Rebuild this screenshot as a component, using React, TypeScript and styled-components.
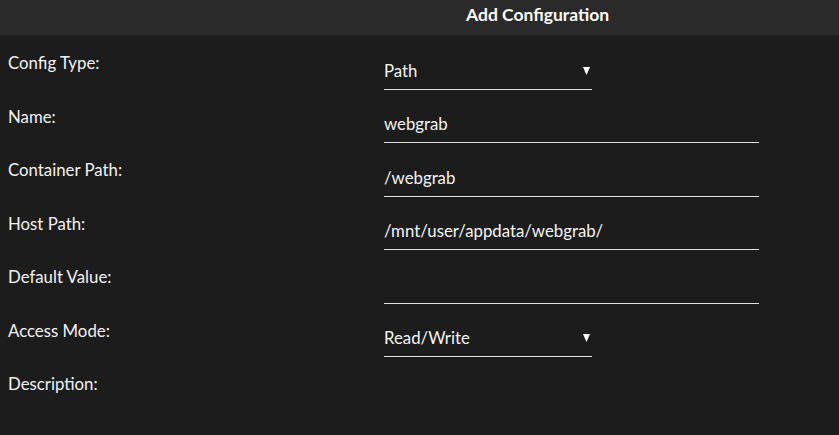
import React from 'react'
import styled, { createGlobalStyle } from 'styled-components'

const GlobalStyle = createGlobalStyle`
	html, body {
		margin: 0;
		padding: 0;
		background: #1c1c1c;
	}
	body {
		font-family: Lato, 'Open Sans', sans-serif;
		color: #f2f2f2;
	}
`

const Page = styled.div`
	width: 839px;
	height: 435px;
	background: #1c1c1c;
	overflow: hidden;
`

const TitleBar = styled.header`
	height: 35px;
	box-sizing: border-box;
	background: #2a2a2a;
	padding: 4px 0 0 466px;
	line-height: 22px;
	font-size: 17.5px;
	font-weight: 700;
	color: #fff;
`

const Form = styled.div`
	display: flex;
	flex-direction: column;
	padding-top: 1px;
`

const Row = styled.div`
	display: grid;
	grid-template-columns: 384px 1fr;
	height: 53.5px;
	align-items: end;
`

const Label = styled.div`
	padding-left: 8px;
	padding-bottom: 16.5px;
	line-height: 20px;
	font-size: 16.8px;
`

const Field = styled.div<{ $width: number }>`
	position: relative;
	width: ${(p) => p.$width}px;
	height: 33px;
	line-height: 30px;
	border-bottom: 1px solid #e0e0e0;
	font-size: 16.8px;
	color: #f5f5f5;
`

const Arrow = styled.svg`
	position: absolute;
	right: 2px;
	top: 11px;
	width: 7px;
	height: 8px;
`

type Item = {
	label: string
	value?: string
	kind?: 'select' | 'text' | 'none'
}

const items: Item[] = [
	{ label: 'Config Type:', value: 'Path', kind: 'select' },
	{ label: 'Name:', value: 'webgrab' },
	{ label: 'Container Path:', value: '/webgrab' },
	{ label: 'Host Path:', value: '/mnt/user/appdata/webgrab/' },
	{ label: 'Default Value:', value: '' },
	{ label: 'Access Mode:', value: 'Read/Write', kind: 'select' },
	{ label: 'Description:', kind: 'none' },
]

const SelectField = ({ value }: { value: string }) => (
	<Field $width={208}>
		{value}
		<Arrow viewBox="0 0 7 8">
			<polygon points="0,0 7,0 3.5,8" fill="#fff" />
		</Arrow>
	</Field>
)

export default function App() {
	return (
		<Page>
			<GlobalStyle />
			<TitleBar>Add Configuration</TitleBar>
			<Form>
				{items.map((item) => (
					<Row key={item.label}>
						<Label>{item.label}</Label>
						{item.kind === 'select' ? (
							<SelectField value={item.value || ''} />
						) : item.kind === 'none' ? (
							<div />
						) : (
							<Field $width={375}>{item.value}</Field>
						)}
					</Row>
				))}
			</Form>
		</Page>
	)
}
